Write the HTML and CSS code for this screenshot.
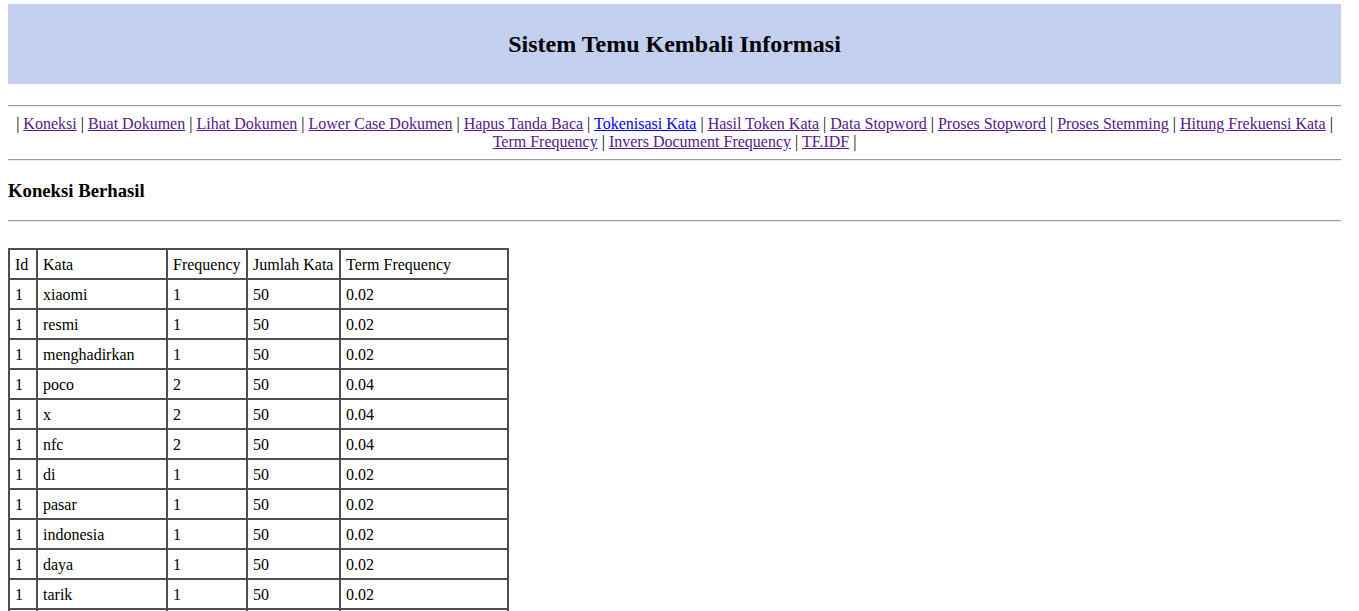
FILE: index.html
```html
<!DOCTYPE html>
<html>
<head>
<meta charset="utf-8">
<title>Sistem Temu Kembali Informasi</title>
<link rel="stylesheet" href="styles.css">
</head>
<body>
<div class="header">
  <h2 class="title">Sistem Temu Kembali Informasi</h2>
</div>
<hr class="rule rule-top">
<div class="nav">
| <a class="visited" href="#koneksi">Koneksi</a>
| <a class="visited" href="#buat">Buat Dokumen</a>
| <a class="visited" href="#lihat">Lihat Dokumen</a>
| <a class="visited" href="#lower">Lower Case Dokumen</a>
| <a class="visited" href="#hapus">Hapus Tanda Baca</a>
| <a class="fresh" href="#token">Tokenisasi Kata</a>
| <a class="visited" href="#hasil">Hasil Token Kata</a>
| <a class="visited" href="#data">Data Stopword</a>
| <a class="visited" href="#proses">Proses Stopword</a>
| <a class="visited" href="#stem">Proses Stemming</a>
| <a class="visited" href="#hitung">Hitung Frekuensi Kata</a>
| <a class="visited" href="#tf">Term Frequency</a>
| <a class="visited" href="#idf">Invers Document Frequency</a>
| <a class="visited" href="#tfidf">TF.IDF</a> |
</div>
<hr class="rule">
<h3 class="status">Koneksi Berhasil</h3>
<hr class="rule rule-before-table">
<table class="data">
  <colgroup>
    <col class="c-id">
    <col class="c-kata">
    <col class="c-freq">
    <col class="c-jml">
    <col class="c-tf">
  </colgroup>
  <thead>
    <tr>
      <th>Id</th>
      <th>Kata</th>
      <th>Frequency</th>
      <th>Jumlah Kata</th>
      <th>Term Frequency</th>
    </tr>
  </thead>
  <tbody>
    <tr><td>1</td><td>xiaomi</td><td>1</td><td>50</td><td>0.02</td></tr>
    <tr><td>1</td><td>resmi</td><td>1</td><td>50</td><td>0.02</td></tr>
    <tr><td>1</td><td>menghadirkan</td><td>1</td><td>50</td><td>0.02</td></tr>
    <tr><td>1</td><td>poco</td><td>2</td><td>50</td><td>0.04</td></tr>
    <tr><td>1</td><td>x</td><td>2</td><td>50</td><td>0.04</td></tr>
    <tr><td>1</td><td>nfc</td><td>2</td><td>50</td><td>0.04</td></tr>
    <tr><td>1</td><td>di</td><td>1</td><td>50</td><td>0.02</td></tr>
    <tr><td>1</td><td>pasar</td><td>1</td><td>50</td><td>0.02</td></tr>
    <tr><td>1</td><td>indonesia</td><td>1</td><td>50</td><td>0.02</td></tr>
    <tr><td>1</td><td>daya</td><td>1</td><td>50</td><td>0.02</td></tr>
    <tr><td>1</td><td>tarik</td><td>1</td><td>50</td><td>0.02</td></tr>
    <tr><td>1</td><td>utama</td><td>1</td><td>50</td><td>0.02</td></tr>
    <tr><td>1</td><td>harga</td><td>2</td><td>50</td><td>0.04</td></tr>
    <tr><td>1</td><td>terjangkau</td><td>1</td><td>50</td><td>0.02</td></tr>
  </tbody>
</table>
</body>
</html>
```

FILE: styles.css
```css
html, body {
  font-family: "Liberation Serif", "Times New Roman", serif;
  font-size: 16px;
  color: #000;
  background: #fff;
}

body {
  margin: 4px 18px 8px 8px;
}

.header {
  background: #c3cfef;
  height: 80px;
  display: flex;
  align-items: center;
  justify-content: center;
}

.title {
  margin: 0;
  font-size: 24px;
  font-weight: bold;
  line-height: 28px;
}

.rule {
  border: none;
  border-top: 1px solid #9a9a9a;
  border-bottom: 1px solid #eeeeee;
  height: 0;
  margin: 8px 0;
}

.rule-top {
  margin-top: 21px;
}

.nav {
  text-align: center;
  line-height: 18px;
}

.visited {
  color: #551a8b;
}

.fresh {
  color: #0000ee;
}

.status {
  font-size: 18.72px;
  font-weight: bold;
  margin: 18.72px 0;
  line-height: 21.5px;
}

.rule-before-table {
  margin-bottom: 26px;
}

.data {
  border-collapse: separate;
  border-spacing: 0;
  border: 1px solid #4f4f4f;
  table-layout: fixed;
  width: 499px;
}

.data th,
.data td {
  border: 1px solid #4f4f4f;
  padding: 6px 5px 4px 5px;
  text-align: left;
  font-weight: normal;
  line-height: 18px;
  white-space: nowrap;
}

.c-id { width: 28px; }
.c-kata { width: 130px; }
.c-freq { width: 80px; }
.c-jml { width: 93px; }
.c-tf { width: 168px; }
```
